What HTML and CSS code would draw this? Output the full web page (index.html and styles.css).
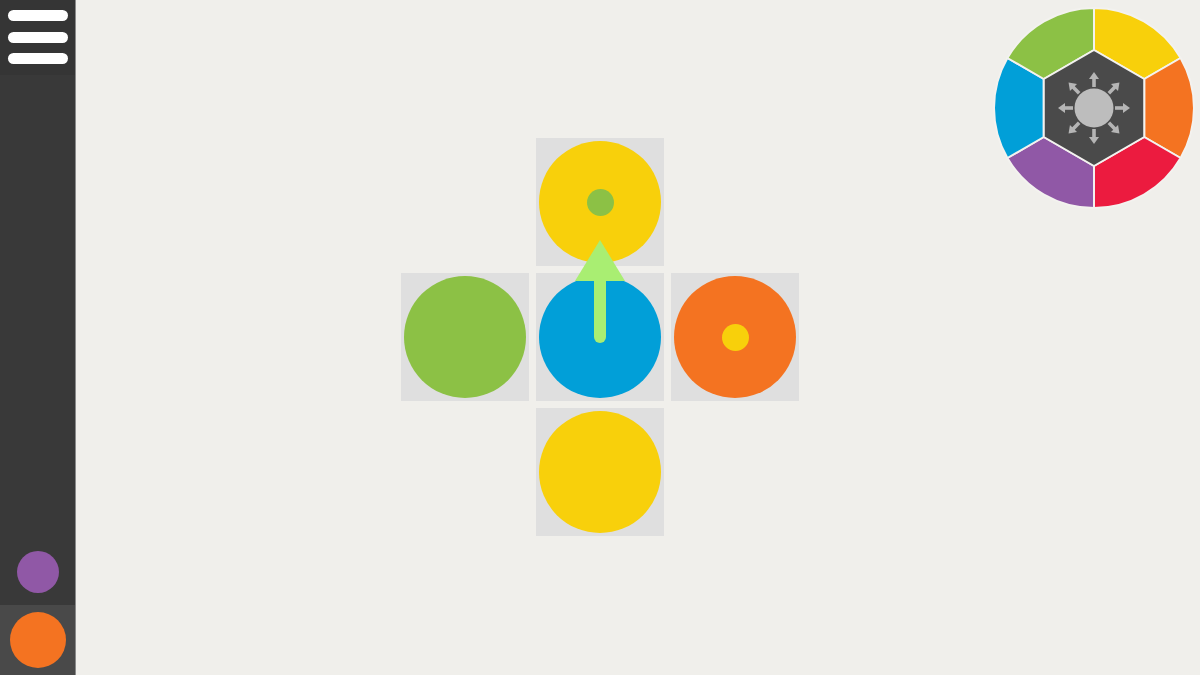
FILE: index.html
```html
<!DOCTYPE html>
<html>
<head>
<meta charset="utf-8">
<link rel="stylesheet" href="styles.css">
</head>
<body>
<div class="app">
  <aside class="sidebar">
    <div class="menu">
      <span class="bar"></span>
      <span class="bar"></span>
      <span class="bar"></span>
    </div>
    <div class="spacer"></div>
    <div class="slot"><span class="dot purple-bg"></span></div>
    <div class="slot active"><span class="dot big orange-bg"></span></div>
  </aside>
  <main class="main">
    <div class="board">
      <div class="tile t-top"><span class="disc yellow-bg"><span class="pip green-bg"></span></span></div>
      <div class="tile t-left"><span class="disc green-bg"></span></div>
      <div class="tile t-center"><span class="disc blue-bg"></span></div>
      <div class="tile t-right"><span class="disc orange-bg"><span class="pip yellow-bg"></span></span></div>
      <div class="tile t-bottom"><span class="disc yellow-bg"></span></div>
      <svg class="arrow" width="398" height="398" viewBox="0 0 398 398">
        <line x1="199" y1="135" x2="199" y2="199" stroke="#a9ee72" stroke-width="12" stroke-linecap="round"/>
        <polygon points="199,102 224,143 174,143" fill="#a9ee72"/>
      </svg>
    </div>
    <svg class="wheel" width="202" height="202" viewBox="-1 -1 202 202">
      <g stroke="#f3f2ef" stroke-width="2" stroke-linejoin="round">
        <path d="M100,42 L100,0 A100,100 0 0 1 186.6,50 L150.23,71 Z" fill="#f8d00b"/>
        <path d="M150.23,71 L186.6,50 A100,100 0 0 1 186.6,150 L150.23,129 Z" fill="#f47321"/>
        <path d="M150.23,129 L186.6,150 A100,100 0 0 1 100,200 L100,158 Z" fill="#ec1b3f"/>
        <path d="M100,158 L100,200 A100,100 0 0 1 13.4,150 L49.77,129 Z" fill="#9058a6"/>
        <path d="M49.77,129 L13.4,150 A100,100 0 0 1 13.4,50 L49.77,71 Z" fill="#019fd8"/>
        <path d="M49.77,71 L13.4,50 A100,100 0 0 1 100,0 L100,42 Z" fill="#8cc145"/>
        <polygon points="100,42 150.23,71 150.23,129 100,158 49.77,129 49.77,71" fill="#4a4a4a"/>
      </g>
      <circle cx="100" cy="100" r="19.5" fill="#bdbdbd"/>
      <g fill="#b5b5b5" transform="translate(100 100)">
        <g id="ar"><rect x="-1.8" y="-30" width="3.6" height="9"/><polygon points="-5,-29 5,-29 0,-36"/></g>
        <use href="#ar" transform="rotate(45)"/>
        <use href="#ar" transform="rotate(90)"/>
        <use href="#ar" transform="rotate(135)"/>
        <use href="#ar" transform="rotate(180)"/>
        <use href="#ar" transform="rotate(225)"/>
        <use href="#ar" transform="rotate(270)"/>
        <use href="#ar" transform="rotate(315)"/>
      </g>
    </svg>
  </main>
</div>
</body>
</html>
```
FILE: styles.css
```css
html, body {
  margin: 0;
  padding: 0;
  width: 1200px;
  height: 675px;
  overflow: hidden;
  background: #f0efeb;
  font-family: "Liberation Sans", Arial, sans-serif;
}
.app {
  display: flex;
  width: 1200px;
  height: 675px;
}
.sidebar {
  width: 75px;
  flex: none;
  background: #393939;
  display: flex;
  flex-direction: column;
  border-right: 1px solid #8a8a8a;
}
.menu {
  height: 75px;
  background: #353535;
  display: flex;
  flex-direction: column;
  gap: 10.5px;
  padding: 10px 7px 0 8px;
  box-sizing: border-box;
}
.bar {
  display: block;
  height: 11px;
  border-radius: 6px;
  background: #ffffff;
}
.spacer { flex: 1; }
.slot {
  height: 66px;
  display: flex;
  align-items: center;
  justify-content: center;
}
.slot.active {
  height: 70px;
  background: #494949;
}
.dot {
  width: 42px;
  height: 42px;
  border-radius: 50%;
  display: block;
}
.dot.big {
  width: 56px;
  height: 56px;
}
.main {
  flex: 1;
  position: relative;
  display: flex;
  align-items: center;
  justify-content: center;
  padding-right: 76px;
  padding-bottom: 1px;
}
.board {
  position: relative;
  display: grid;
  grid-template-columns: repeat(3, 128px);
  grid-template-rows: repeat(3, 128px);
  gap: 7px;
}
.tile {
  background: #dfdfdf;
  display: flex;
  align-items: center;
  justify-content: center;
}
.t-top { grid-column: 2; grid-row: 1; }
.t-left { grid-column: 1; grid-row: 2; }
.t-center { grid-column: 2; grid-row: 2; }
.t-right { grid-column: 3; grid-row: 2; }
.t-bottom { grid-column: 2; grid-row: 3; }
.disc {
  width: 122px;
  height: 122px;
  border-radius: 50%;
  display: flex;
  align-items: center;
  justify-content: center;
}
.pip {
  width: 27px;
  height: 27px;
  border-radius: 50%;
  display: block;
}
.arrow {
  position: absolute;
  left: 0;
  top: 0;
  pointer-events: none;
}
.wheel {
  position: absolute;
  top: 7px;
  right: 5px;
}
.yellow-bg { background: #f8d00b; }
.green-bg { background: #8cc145; }
.blue-bg { background: #019fd8; }
.orange-bg { background: #f47321; }
.purple-bg { background: #9058a6; }
```
